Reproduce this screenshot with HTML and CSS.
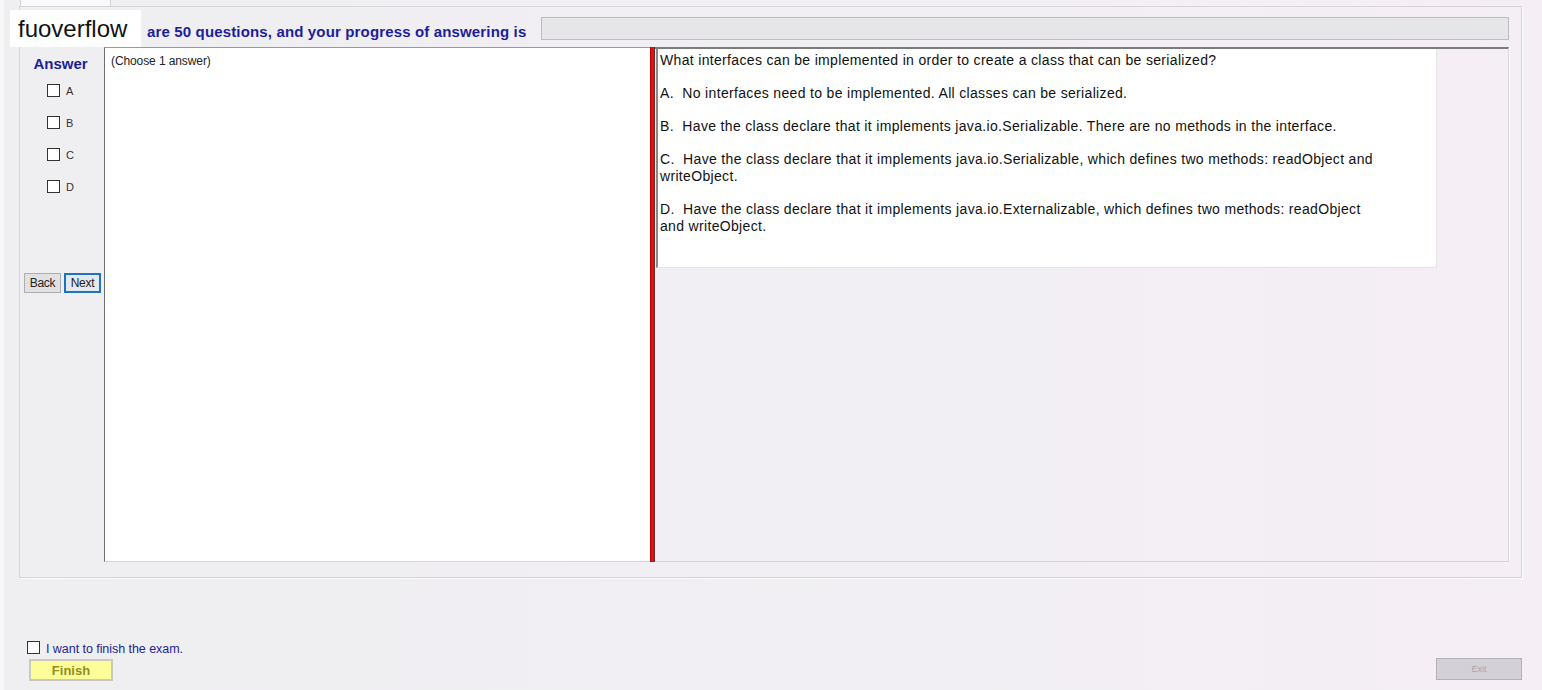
FILE: index.html
```html
<!DOCTYPE html>
<html>
<head>
<meta charset="utf-8">
<title>Exam</title>
<link rel="stylesheet" href="styles.css">
</head>
<body>
<div class="page">
  <div class="tabstrip"><div class="tab"></div></div>
  <div class="panel">
    <div class="header">
      <div class="progress-text">are 50 questions, and your progress of answering is</div>
      <div class="progress-bar"></div>
    </div>
    <div class="content">
      <div class="answer-col">
        <div class="answer-title">Answer</div>
        <div class="options">
          <label class="opt"><span class="box"></span><span class="opt-label">A</span></label>
          <label class="opt"><span class="box"></span><span class="opt-label">B</span></label>
          <label class="opt"><span class="box"></span><span class="opt-label">C</span></label>
          <label class="opt"><span class="box"></span><span class="opt-label">D</span></label>
        </div>
        <div class="nav">
          <button class="btn">Back</button>
          <button class="btn btn-next">Next</button>
        </div>
      </div>
      <div class="choose-panel">(Choose 1 answer)</div>
      <div class="divider"></div>
      <div class="question-area">
        <div class="question-box">
          <p class="q">What interfaces can be implemented in order to create a class that can be serialized?</p>
          <p class="q">A.&nbsp; No interfaces need to be implemented. All classes can be serialized.</p>
          <p class="q">B.&nbsp; Have the class declare that it implements java.io.Serializable. There are no methods in the interface.</p>
          <p class="q">C.&nbsp; Have the class declare that it implements java.io.Serializable, which defines two methods: readObject and writeObject.</p>
          <p class="q">D.&nbsp; Have the class declare that it implements java.io.Externalizable, which defines two methods: readObject and writeObject.</p>
        </div>
      </div>
    </div>
  </div>
  <div class="footer">
    <div class="finish-group">
      <label class="finish-check"><span class="box"></span><span class="finish-label">I want to finish the exam.</span></label>
      <button class="btn-finish">Finish</button>
    </div>
    <button class="btn-exit">Exit</button>
  </div>
  <div class="badge">fuoverflow</div>
</div>
</body>
</html>
```

FILE: styles.css
```css
* { box-sizing: border-box; }
html, body { margin: 0; padding: 0; }
body {
  width: 1542px;
  height: 690px;
  overflow: hidden;
  font-family: "Liberation Sans", Arial, sans-serif;
  background: linear-gradient(90deg, #efeef1 0%, #f1eff3 60%, #f5eef5 100%);
}
.page {
  position: relative;
  width: 1542px;
  height: 690px;
  border-left: 4px solid #f7f7f8;
}
.tabstrip {
  height: 6px;
  padding-left: 16px;
}
.tab {
  width: 91px;
  height: 6px;
  background: #f9f9fa;
  border-left: 1px solid #d4d4d8;
  border-right: 1px solid #d4d4d8;
}
.panel {
  margin-left: 15px;
  width: 1503px;
  height: 572px;
  border: 1px solid #d6d4da;
  box-shadow: 1px 1px 0 #fbfbfc;
  display: flex;
  flex-direction: column;
}
.header {
  height: 40px;
  display: flex;
  align-items: flex-start;
  padding-top: 10px;
  padding-right: 12px;
}
.progress-text {
  padding-left: 127px;
  padding-top: 6px;
  font-size: 15px;
  letter-spacing: 0.15px;
  font-weight: bold;
  color: #1d1d9c;
  white-space: nowrap;
}
.progress-bar {
  margin-left: 15px;
  flex: 1;
  height: 23px;
  background: #e6e6e8;
  border: 1px solid #bdbdc0;
}
.content {
  display: flex;
  height: 515px;
  margin-right: 12px;
}
.answer-col {
  width: 84px;
  display: flex;
  flex-direction: column;
  align-items: center;
}
.answer-title {
  margin-top: 8px;
  font-size: 15px;
  font-weight: bold;
  color: #1d1d9c;
  height: 17px;
  line-height: 17px;
  padding-right: 3px;
}
.options {
  margin-top: 12px;
  display: flex;
  flex-direction: column;
  gap: 19px;
  align-self: flex-start;
  padding-left: 27px;
}
.opt {
  display: flex;
  align-items: center;
  height: 13px;
  gap: 6px;
}
.box {
  display: block;
  width: 13px;
  height: 13px;
  background: #fff;
  border: 1px solid #333;
}
.opt-label {
  font-size: 11px;
  color: #333;
}
.nav {
  margin-top: 80px;
  display: flex;
  gap: 3px;
  align-self: flex-start;
  padding-left: 4px;
}
.btn {
  width: 37px;
  height: 20px;
  padding: 0;
  font-family: "Liberation Sans", Arial, sans-serif;
  font-size: 12px;
  letter-spacing: -0.3px;
  color: #222;
  background: #e1e1e1;
  border: 1px solid #adadad;
}
.btn-next {
  border: 2px solid #1a73c4;
  background: #e5e9ee;
}
.choose-panel {
  width: 546px;
  background: #fff;
  border-left: 1px solid #6e6e6e;
  border-top: 1px solid #9a9a9a;
  border-bottom: 1px solid #d6d6d6;
  padding: 6px 0 0 6px;
  font-size: 12px;
  letter-spacing: -0.1px;
  color: #222;
}
.divider {
  width: 5px;
  background: #e30f12;
  border-right: 1px solid #6b2a2a;
  border-left: 1px solid #b00;
}
.question-area {
  flex: 1;
  border-top: 2px solid #7c7c7c;
  border-bottom: 1px solid #d8d6dc;
  border-right: 1px solid #d8d6dc;
  box-shadow: 1px 0 0 #fafafa;
  padding-left: 1px;
}
.question-box {
  width: 781px;
  height: 219px;
  background: #fff;
  border-left: 2px solid #8a8a8a;
  border-right: 1px solid #e4e4e6;
  border-bottom: 1px solid #e4e4e6;
  padding: 3px 0 0 2px;
}
.q {
  margin: 0 0 16px 0;
  width: 724px;
  font-size: 14px;
  letter-spacing: 0.33px;
  line-height: 17px;
  color: #111;
}
.footer {
  margin-top: 62px;
  padding-left: 23px;
  padding-right: 20px;
  display: flex;
  justify-content: space-between;
  align-items: flex-end;
}
.finish-group {
  display: flex;
  flex-direction: column;
}
.finish-check {
  display: flex;
  align-items: center;
  gap: 6px;
  height: 14px;
}
.finish-label {
  font-size: 12.5px;
  letter-spacing: -0.05px;
  color: #24249a;
  padding-top: 3px;
}
.btn-finish {
  margin-top: 5px;
  margin-left: 2px;
  width: 84px;
  height: 22px;
  padding: 0;
  background: #fdfd9a;
  border: 2px solid #c9c9bd;
  font-family: "Liberation Sans", Arial, sans-serif;
  font-size: 13px;
  font-weight: bold;
  color: #8f8f1c;
}
.btn-exit {
  width: 86px;
  height: 22px;
  margin-bottom: 1px;
  padding: 0;
  background: #d4d0d8;
  border: 1px solid #b4b0b8;
  font-family: "Liberation Sans", Arial, sans-serif;
  font-size: 9px;
  color: #aaa6ae;
}
.badge {
  position: absolute;
  left: 6px;
  top: 10px;
  width: 131px;
  height: 37px;
  background: #fff;
  padding-left: 8px;
  font-size: 24px;
  line-height: 37px;
  color: #111;
}
```
